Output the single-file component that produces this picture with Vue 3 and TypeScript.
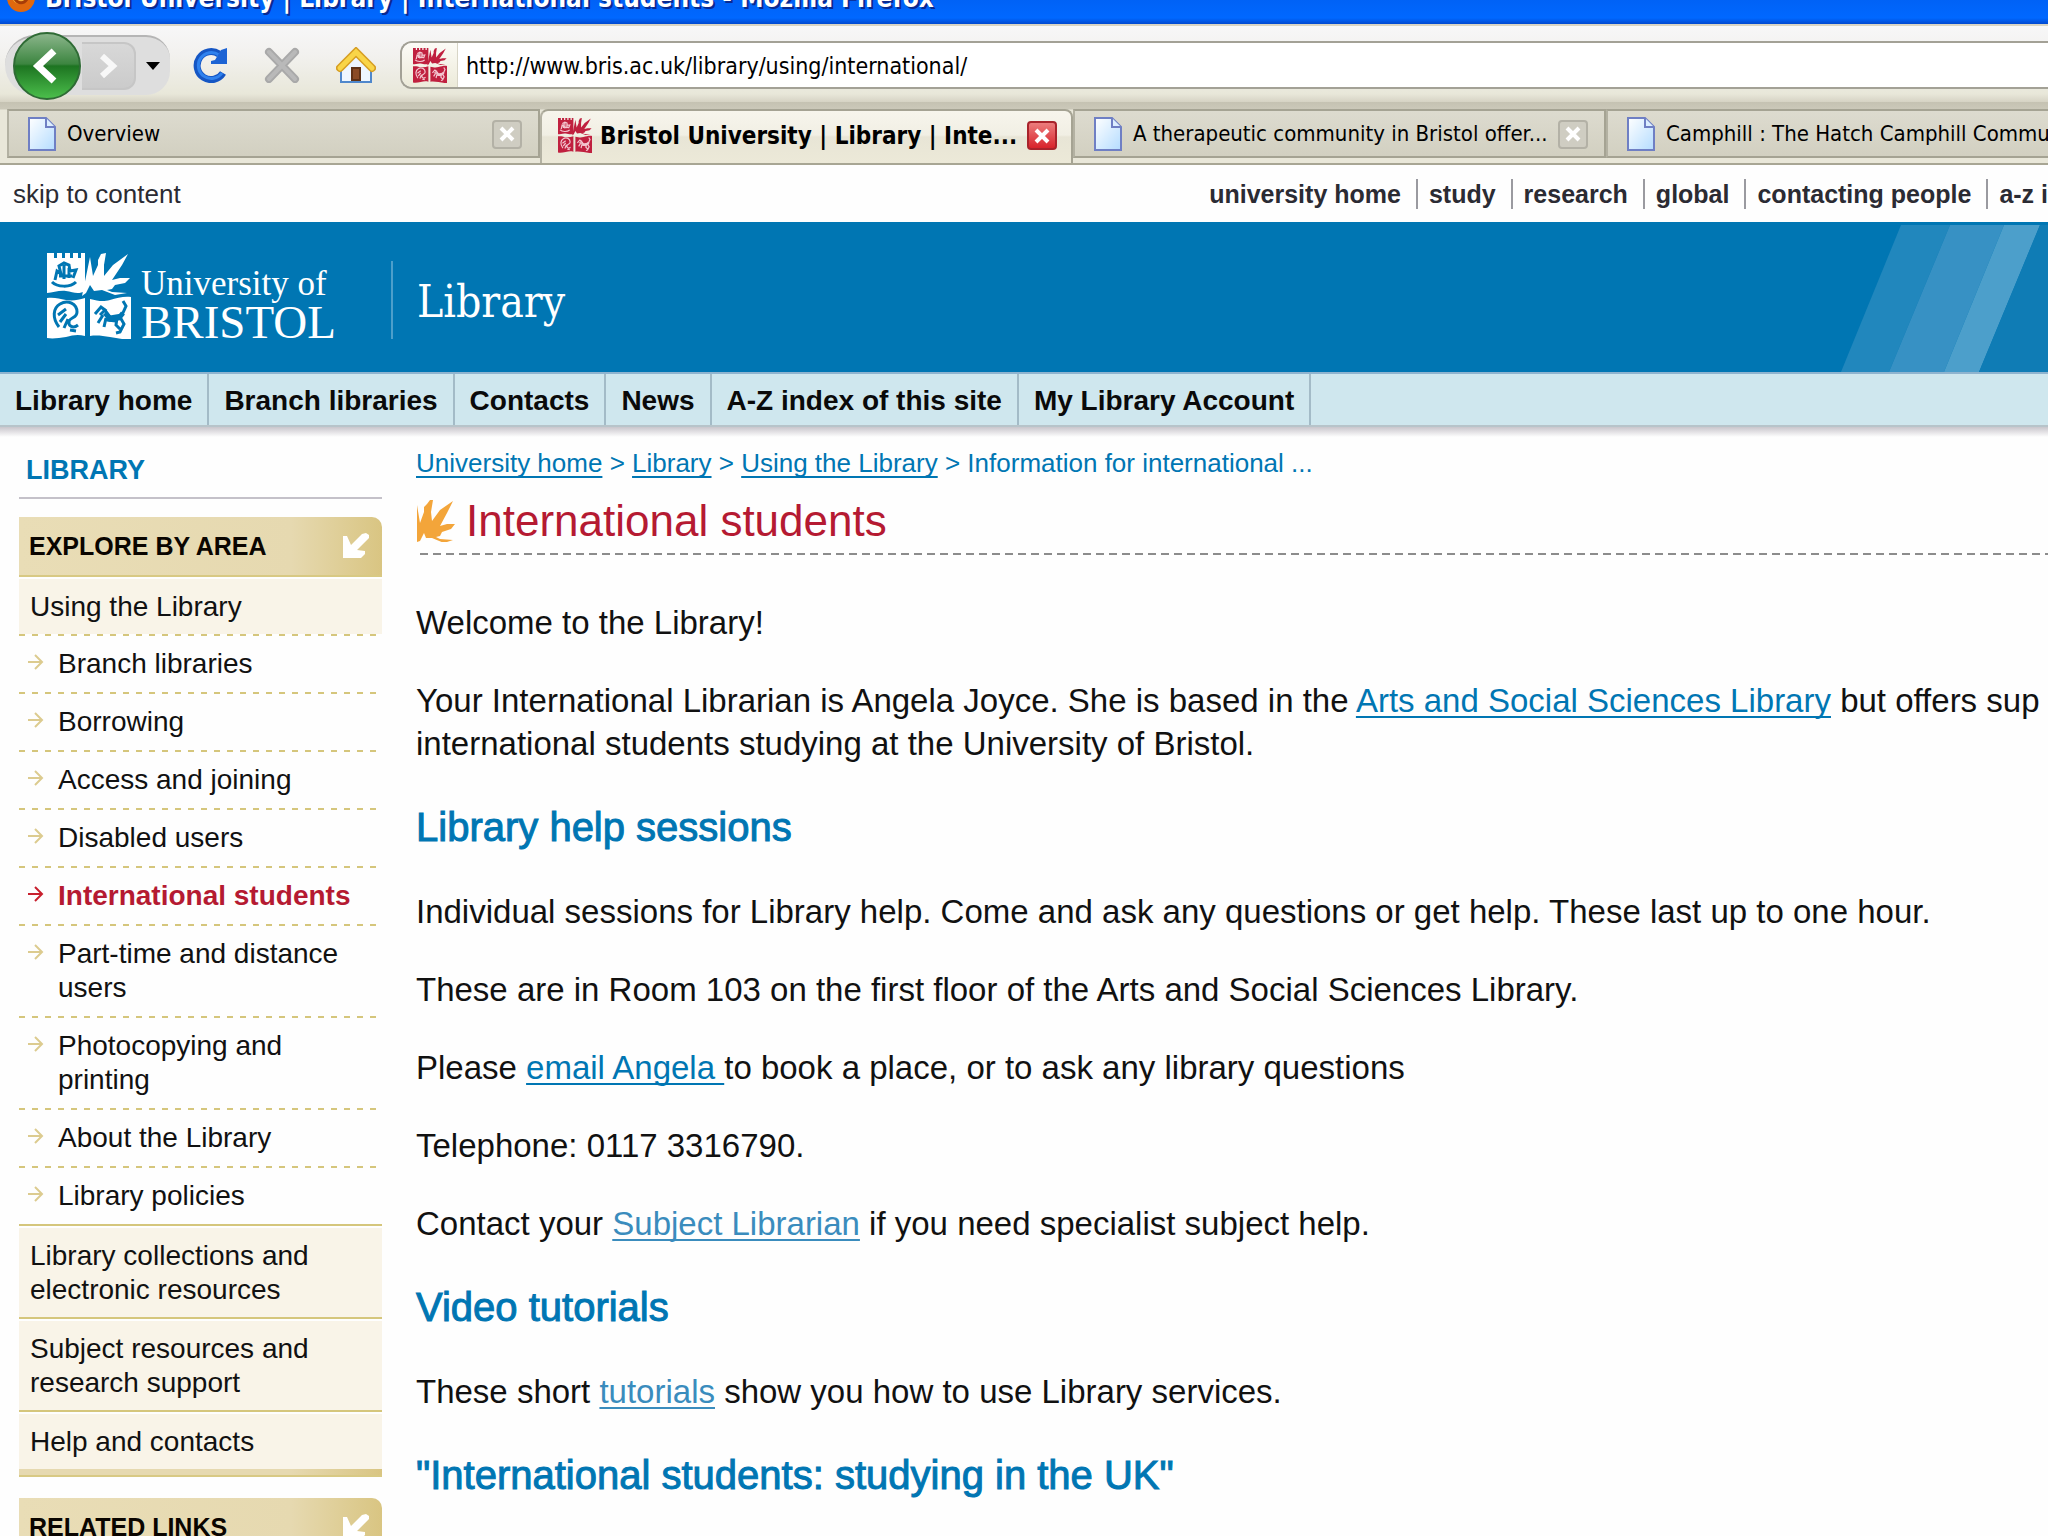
<script setup lang="ts">
import { ref } from 'vue'

interface Tab {
  title: string
  active?: boolean
  closable: boolean
}

interface SubItem {
  label: string
  current?: boolean
}

const address = ref('http://www.bris.ac.uk/library/using/international/')

const tabs: Tab[] = [
  { title: 'Overview', closable: true },
  { title: 'Bristol University | Library | Inte...', active: true, closable: true },
  { title: 'A therapeutic community in Bristol offer...', closable: true },
  { title: 'Camphill : The Hatch Camphill Commu', closable: false },
]

const topLinks: string[] = ['university home', 'study', 'research', 'global', 'contacting people', 'a-z i']

const siteLinks: string[] = [
  'Library home',
  'Branch libraries',
  'Contacts',
  'News',
  'A-Z index of this site',
  'My Library Account',
]

const subItems: SubItem[] = [
  { label: 'Branch libraries' },
  { label: 'Borrowing' },
  { label: 'Access and joining' },
  { label: 'Disabled users' },
  { label: 'International students', current: true },
  { label: 'Part-time and distance users' },
  { label: 'Photocopying and printing' },
  { label: 'About the Library' },
  { label: 'Library policies' },
]

const sections: string[] = [
  'Library collections and electronic resources',
  'Subject resources and research support',
  'Help and contacts',
]
</script>

<template>
  <div class="window">
    <svg class="defs" aria-hidden="true">
      <defs>
        <symbol id="crest" viewBox="0 0 84 86">
          <path
            fill="currentColor"
            d="M0 0h7v5h3V0h5v5h3V0h5v5h3V0h5v5h3V0h4v38c-7 4-12 1-19 0-7-1-13 2-19 2z"
          />
          <path
            fill="currentColor"
            d="M43 4l3 19 5-11 0-5 3-6 5-1-2 12 0 11 9-11L81 1l-6 11-10 15 8-2 10 0-5 5-10 2-3 4-5 1 5 2 15 1-12 2-13-5-8 1-4-6-4 8-4 3z"
          />
          <path fill="currentColor" d="M0 45c8-1 12 1 19 2 7 1 12 0 19-2v38c-7-2-12-1-19 1-7 1-13 2-19 1z" />
          <path fill="currentColor" d="M43 46c8 2 13 3 20 1 7-2 14-4 21-3v42c-8 1-14-1-21-2-7-1-13-2-20-1z" />
          <g fill="none" stroke="var(--crest-ink)" stroke-width="3">
            <path d="M5 29c5 5 18 6 24 0M8 27l2-9 4 3-2-8 5-3 5 2 1 6 6-1-3 8M12 23h13M17 12v14M22 15v10" />
            <path d="M12 74C5 65 6 55 13 51c8-5 17 0 17 8 0 6-6 5-8 9-1 5 4 8 9 4M11 62l8-6M13 69l6-8M17 75l4-9M23 77l6 1" />
            <path d="M48 61l6-7 4 3-5 5M57 56l6 8 12-2 4-9-3-5M56 62l-5 8M59 65l-2 9M73 64l4 7-4 8-4 1M70 65l-1 7 4 4M60 67l9 1" />
            <path d="M58 60l5 6 9-1 4-5" stroke-width="5" />
          </g>
        </symbol>
        <symbol id="flame" viewBox="0 0 40 42">
          <path
            fill="currentColor"
            d="M1 5l3 18 4-11 0-5 3-3 3-4h3l-2 12 1 9 8-11L37 1l-6 12-7 13 7-2 8 0-4 5-9 3-2 4-4 1 4 2 13 1-9 3-12-5-6 0-2-5-4 8-3 1z"
          />
        </symbol>
        <symbol id="corner-arrow" viewBox="0 0 26 26">
          <path fill="#fff" d="M0 3h4l4 9L19 1l4-1 3 2v3L14 17l8 1v3l-4 4H0z" />
        </symbol>
        <linearGradient id="page-fill" x1="0" y1="0" x2="1" y2="1">
          <stop offset="0" stop-color="#fff" />
          <stop offset="1" stop-color="#b4dcff" />
        </linearGradient>
        <linearGradient id="back-fill" x1="0" y1="0" x2="0" y2="1">
          <stop offset="0" stop-color="#8db78d" />
          <stop offset="0.47" stop-color="#3c8540" />
          <stop offset="0.5" stop-color="#1d7421" />
          <stop offset="1" stop-color="#4cc04c" />
        </linearGradient>
      </defs>
    </svg>

    <header class="titlebar">
      <div class="titlebar-row">
        <svg class="app-icon" viewBox="0 0 30 30" aria-hidden="true">
          <circle cx="15" cy="15" r="14" fill="#e0680e" />
          <circle cx="14" cy="13" r="8" fill="#f9b53c" />
          <path d="M9 16c3 5 9 5 12 0" fill="none" stroke="#a63c08" stroke-width="3" />
        </svg>
        <span>Bristol University | Library | International students - Mozilla Firefox</span>
      </div>
    </header>

    <div class="toolbar">
      <div class="history">
        <button class="back" type="button" aria-label="Back">
          <svg viewBox="0 0 70 70" aria-hidden="true">
            <circle cx="35" cy="35" r="33" fill="url(#back-fill)" stroke="#2f6b35" stroke-width="2" />
            <path d="M42 20L26 35l16 15" fill="none" stroke="#fff" stroke-width="7" />
          </svg>
        </button>
        <button class="forward" type="button" aria-label="Forward">
          <svg viewBox="0 0 20 26" aria-hidden="true">
            <path d="M4 3l11 10L4 23" fill="none" stroke="#f8f8f8" stroke-width="6" />
          </svg>
        </button>
        <button class="recent" type="button" aria-label="Recent pages">
          <svg viewBox="0 0 14 8" aria-hidden="true"><path d="M0 0h14L7 8z" fill="#000" /></svg>
        </button>
      </div>
      <button class="tool" type="button" aria-label="Reload">
        <svg viewBox="0 0 36 36" aria-hidden="true">
          <path d="M31 26A14 14 0 1 1 27 7" fill="none" stroke="#1556c4" stroke-width="7" />
          <path d="M30 26A13 13 0 1 1 27 8" fill="none" stroke="#2f82ee" stroke-width="3" />
          <path d="M35 1v16H19v-3l4-1 6-10z" fill="#1c63d4" />
        </svg>
      </button>
      <button class="tool" type="button" aria-label="Stop">
        <svg viewBox="0 0 36 36" aria-hidden="true">
          <path d="M5 5l26 27M31 5L5 32" fill="none" stroke="#a9a9a9" stroke-width="8" stroke-linecap="round" />
          <path d="M5 5l26 27M31 5L5 32" fill="none" stroke="#b9b9b9" stroke-width="4" stroke-linecap="round" />
        </svg>
      </button>
      <button class="tool" type="button" aria-label="Home">
        <svg viewBox="0 0 40 36" aria-hidden="true">
          <path d="M5 19L20 6l15 13v16H5z" fill="#eef6ff" stroke="#4f87cc" stroke-width="2" />
          <path d="M16 21h8v12h-8z" fill="#8a4b25" stroke="#5f3216" stroke-width="2" />
          <path d="M4 21L20 5l16 16" fill="none" stroke="#d69e22" stroke-width="8" stroke-linecap="round" />
          <path d="M4 21L20 5l16 16" fill="none" stroke="#f9d548" stroke-width="5" stroke-linecap="round" />
        </svg>
      </button>
      <div class="address">
        <span class="site-id"><svg class="favicon"><use href="#crest" /></svg></span>
        <input v-model="address" type="text" aria-label="Address" spellcheck="false" />
      </div>
    </div>

    <div class="tabstrip">
      <div v-for="tab in tabs" :key="tab.title" class="tab" :class="{ active: tab.active }">
        <svg v-if="tab.active" class="favicon"><use href="#crest" /></svg>
        <svg v-else class="page-icon" viewBox="0 0 28 34" aria-hidden="true">
          <path d="M1 1h17l9 9v23H1z" fill="url(#page-fill)" stroke="#6f7fc4" stroke-width="2" />
          <path d="M18 1v9h9" fill="#dceeff" stroke="#6f7fc4" stroke-width="2" />
        </svg>
        <span class="tab-title">{{ tab.title }}</span>
        <button v-if="tab.closable" class="close" type="button" aria-label="Close tab">
          <svg viewBox="0 0 16 16" aria-hidden="true">
            <path d="M2 2l12 12M14 2L2 14" fill="none" stroke="#fff" stroke-width="4" />
          </svg>
        </button>
      </div>
    </div>

    <nav class="toplinks" aria-label="University">
      <a class="skip" href="#content">skip to content</a>
      <ul>
        <li v-for="link in topLinks" :key="link"><a href="#">{{ link }}</a></li>
      </ul>
    </nav>

    <div class="banner">
      <a class="logo" href="#">
        <svg class="logo-crest" aria-hidden="true"><use href="#crest" /></svg>
        <span class="logo-words">
          <span class="logo-small">University of</span>
          <span class="logo-large">BRISTOL</span>
        </span>
      </a>
      <span class="department">Library</span>
      <svg class="stripes" viewBox="0 0 208 150" preserveAspectRatio="none" aria-hidden="true">
        <path d="M61 3h49L49 150H1z" fill="#2187bd" />
        <path d="M110 3h54l-60 147H49z" fill="#3791c4" />
        <path d="M164 3h36l-61 147h-35z" fill="#4c9fcb" />
        <path d="M200 3h8v147h-69z" fill="#0f7cb5" />
      </svg>
    </div>

    <nav class="sitenav" aria-label="Library">
      <a v-for="link in siteLinks" :key="link" href="#">{{ link }}</a>
    </nav>
    <div class="navshadow"></div>

    <div class="columns">
      <aside>
        <h2 class="side-title">LIBRARY</h2>
        <section class="box">
          <h3>EXPLORE BY AREA<svg class="corner" aria-hidden="true"><use href="#corner-arrow" /></svg></h3>
          <a class="parent" href="#">Using the Library</a>
          <ul>
            <li v-for="item in subItems" :key="item.label" :class="{ current: item.current }">
              <svg viewBox="0 0 16 16" aria-hidden="true">
                <path d="M0 8h14M7 1l7 7-7 7" fill="none" stroke="currentColor" stroke-width="2" />
              </svg>
              <a href="#">{{ item.label }}</a>
            </li>
          </ul>
          <a v-for="section in sections" :key="section" class="section" href="#">{{ section }}</a>
          <div class="box-end"></div>
        </section>
        <section class="box">
          <h3>RELATED LINKS<svg class="corner" aria-hidden="true"><use href="#corner-arrow" /></svg></h3>
        </section>
      </aside>

      <main id="content">
        <div class="crumbs">
          <a href="#">University home</a> &gt; <a href="#">Library</a> &gt; <a href="#">Using the Library</a> &gt;
          Information for international ...
        </div>
        <h1>
          <svg class="flame" aria-hidden="true"><use href="#flame" /></svg>
          <span>International students</span>
        </h1>
        <article>
          <p>Welcome to the Library!</p>
          <p>
            Your International Librarian is Angela Joyce. She is based in the
            <a href="#">Arts and Social Sciences Library</a> but offers sup<br />
            international students studying at the University of Bristol.
          </p>
          <h2>Library help sessions</h2>
          <p>
            Individual sessions for Library help. Come and ask any questions or get help. These last up to one hour.
          </p>
          <p>These are in Room 103 on the first floor of the Arts and Social Sciences Library.</p>
          <p>Please <a href="#">email Angela&nbsp;</a>to book a place, or to ask any library questions</p>
          <p>Telephone: 0117 3316790.</p>
          <p>
            Contact your <a class="visited" href="#">Subject Librarian</a> if you need specialist subject help.
          </p>
          <h2>Video tutorials</h2>
          <p>These short <a class="visited" href="#">tutorials</a> show you how to use Library services.</p>
          <h2>"International students: studying in the UK"</h2>
        </article>
      </main>
    </div>
  </div>
</template>

<style>
body {
  background: #fefefe;
}
</style>

<style scoped>
.window {
  height: 100vh;
  overflow: hidden;
  font-family: "Liberation Sans", Arial, sans-serif;
  color: #111;
  white-space: nowrap;
  --crest-ink: #f3c5cf;
}
.window * {
  box-sizing: border-box;
}
a {
  color: inherit;
  text-decoration: none;
}
h1,
h2,
h3,
p,
ul {
  margin: 0;
  padding: 0;
}
ul {
  list-style: none;
}
button {
  margin: 0;
  padding: 0;
  border: 0;
  background: none;
  flex: none;
}
svg {
  display: block;
  flex: none;
}
.defs {
  position: absolute;
  width: 0;
  height: 0;
}

/* browser chrome */
.titlebar {
  height: 24px;
  overflow: hidden;
  background: linear-gradient(#0062f6 0, #0068ff 18px, #0048d0 24px);
}
.titlebar-row {
  display: flex;
  align-items: center;
  gap: 9px;
  height: 32px;
  margin: -18px 0 0 6px;
  font: bold 26px/32px "DejaVu Sans Condensed", "DejaVu Sans", sans-serif;
  color: #fff;
  text-shadow: 2px 2px 0 #0a2a90;
}
.app-icon {
  width: 30px;
  height: 30px;
}
.toolbar {
  display: flex;
  align-items: center;
  height: 78px;
  padding: 2px 0 0 5px;
  border-top: 2px solid #d8d4c4;
  background: linear-gradient(#f7f7f8 0, #f2f1ee 30px, #e8e7d9 68px, #d6d3c4 100%);
}
.history {
  display: flex;
  align-items: center;
  width: 165px;
  height: 60px;
  margin-right: 22px;
  border-top: 2px solid #b5b5b5;
  border-radius: 30px 24px 24px 30px;
  background: #dedede;
}
.back {
  width: 70px;
  height: 70px;
  margin: -5px 0 -5px 7px;
}
.back svg {
  width: 70px;
  height: 70px;
}
.forward {
  display: grid;
  place-items: center;
  width: 54px;
  height: 48px;
  border: 2px solid #c6c6c6;
  border-left: 0;
  border-radius: 0 12px 12px 0;
  background: linear-gradient(#d8d8d8, #cbcbcb);
}
.forward svg {
  width: 20px;
  height: 26px;
}
.recent {
  width: 14px;
  margin-left: 10px;
}
.recent svg {
  width: 14px;
  height: 8px;
}
.tool {
  margin-right: 36px;
}
.tool svg {
  width: 36px;
  height: 36px;
}
.tool:nth-of-type(3) svg {
  width: 40px;
}
.address {
  display: flex;
  flex: 1;
  height: 48px;
  margin-left: -12px;
  border: 2px solid #a3a196;
  border-right: 0;
  border-radius: 12px 0 0 12px;
  background: #fff;
  overflow: hidden;
}
.site-id {
  display: flex;
  align-items: center;
  justify-content: flex-end;
  width: 56px;
  padding-right: 10px;
  border-right: 1px solid #d8d5c6;
  background: linear-gradient(#fcfbf6, #ecead9);
}
.favicon {
  width: 34px;
  height: 35px;
  color: #c0203f;
}
.address input {
  flex: 1;
  min-width: 0;
  padding: 2px 0 0 8px;
  border: 0;
  outline: 0;
  background: none;
  font: 23px "DejaVu Sans Condensed", "DejaVu Sans", sans-serif;
  color: #000;
}
.tabstrip {
  display: flex;
  align-items: flex-start;
  height: 63px;
  padding: 7px 0 0 7px;
  overflow: hidden;
  border-bottom: 2px solid #a8a694;
  background: linear-gradient(#c5c2b2 0, #cbc8b9 7px, #e9e7d9 8px, #e9e7d9 100%);
}
.tab {
  display: flex;
  align-items: center;
  flex: 0 0 533px;
  min-width: 0;
  height: 49px;
  padding: 1px 16px 0 19px;
  border: 2px solid #a5a393;
  border-left-color: #b3b1a2;
  background: linear-gradient(#dddbcf, #d2d0c1);
  font: 22px/28px "DejaVu Sans Condensed", "DejaVu Sans", sans-serif;
  color: #000;
}
.tab.active {
  height: 54px;
  padding: 0 14px 3px 16px;
  border-bottom: 0;
  border-radius: 8px 8px 0 0;
  background: linear-gradient(#f7f5ec 0, #f1efe4 24px, #e8e5d6 26px, #ece9d8 100%);
  font-size: 24px;
  font-weight: bold;
}
.tab.active .tab-title {
  margin-left: 8px;
}
.page-icon {
  width: 28px;
  height: 34px;
}
.tab-title {
  flex: 1;
  min-width: 0;
  margin-left: 11px;
}
.close {
  display: grid;
  place-items: center;
  width: 30px;
  height: 29px;
  border: 2px solid #b3b1a6;
  border-radius: 4px;
  background: #cfcdc2;
}
.close svg {
  width: 16px;
  height: 16px;
}
.active .close {
  border-color: #a8232b;
  background: linear-gradient(#ec7d7d, #d8232b);
}

/* site header */
.toplinks {
  display: flex;
  align-items: center;
  height: 57px;
  padding-left: 13px;
  font-size: 26px;
  line-height: 30px;
  color: #2b2b33;
}
.skip {
  flex: 1;
}
.toplinks ul {
  display: flex;
  font-size: 25px;
  font-weight: bold;
}
.toplinks li {
  padding: 0 15px 0 11px;
  border-right: 2px solid #9a9aa0;
}
.toplinks li:last-child {
  padding-right: 0;
  border-right: 0;
}
.banner {
  position: relative;
  display: flex;
  align-items: flex-end;
  height: 152px;
  padding: 0 0 33px 47px;
  border-bottom: 2px solid #8fb4cf;
  background: #0076b3;
  color: #fff;
}
.logo {
  display: flex;
  align-items: flex-end;
  gap: 10px;
  width: 344px;
  --crest-ink: #0076b3;
}
.logo-crest {
  width: 84px;
  height: 86px;
}
.logo-words {
  display: grid;
  font-family: "Liberation Serif", "Times New Roman", serif;
}
.logo-small {
  font-size: 35px;
  line-height: 42px;
}
.logo-large {
  font-size: 47px;
  line-height: 34px;
}
.department {
  height: 78px;
  padding-left: 24px;
  border-left: 2px solid #4c9fcb;
  font: 44px/82px "DejaVu Serif Condensed", "DejaVu Serif", serif;
}
.stripes {
  position: absolute;
  top: 0;
  right: 0;
  width: 208px;
  height: 150px;
}
.sitenav {
  display: flex;
  height: 53px;
  border-bottom: 2px solid #b7c4ca;
  background: #cfe7ee;
  font-size: 28px;
  font-weight: bold;
  line-height: 54px;
  color: #0a0a0a;
}
.sitenav a {
  padding: 0 15px;
  border-right: 2px solid #a3bbc7;
}
.navshadow {
  height: 10px;
  background: linear-gradient(#c9c6cc, #fefefe);
}

/* page columns */
.columns {
  display: flex;
  gap: 34px;
  padding-left: 19px;
}
aside {
  flex: none;
  width: 363px;
  padding-top: 16px;
}
.side-title {
  margin-bottom: 18px;
  padding: 0 8px 10px 7px;
  border-bottom: 2px solid #c4c1c9;
  font-size: 27px;
  line-height: 34px;
  color: #0076b3;
}
.box {
  margin-bottom: 21px;
  font-size: 28px;
  line-height: 34px;
  white-space: normal;
}
.box h3 {
  display: flex;
  align-items: center;
  justify-content: space-between;
  height: 60px;
  padding: 0 13px 0 10px;
  border-bottom: 2px solid #d8c983;
  border-radius: 0 10px 0 0;
  background: linear-gradient(90deg, #e9ddb6 0, #e6d9b0 75%, #d9c582 100%);
  font-size: 25px;
  color: #0a0500;
}
.corner {
  width: 26px;
  height: 26px;
}
.parent,
.section {
  display: block;
  margin-top: 2px;
  padding: 11px 11px 10px;
  background: #f9f4e8;
}
.parent,
.box li {
  background-image: repeating-linear-gradient(90deg, #d5c67c 0, #d5c67c 6px, #fefefe 6px, #fefefe 13px);
  background-position: 0 100%;
  background-size: 100% 2px;
  background-repeat: no-repeat;
}
.parent {
  padding-bottom: 12px;
}
.box li {
  display: flex;
  gap: 14px;
  padding: 11px 8px 13px 9px;
}
.box li svg {
  width: 16px;
  height: 16px;
  margin-top: 7px;
  color: #dccb8f;
}
.box li.current {
  font-weight: bold;
  color: #b51a32;
}
.box li.current svg {
  color: #c8202e;
}
.box li:last-child {
  background-image: linear-gradient(#d5c67c, #d5c67c);
}
.section {
  padding-right: 40px;
  border-bottom: 2px solid #d5c67c;
}
.section:last-of-type {
  border-bottom: 0;
}
.box-end {
  height: 8px;
  background: linear-gradient(90deg, #e6d9b0 0, #e6d9b0 75%, #d9c582 100%);
  border-bottom: 2px solid #d8c983;
}
main {
  flex: 1;
  min-width: 0;
  padding-top: 10px;
}
.crumbs {
  font-size: 26px;
  line-height: 32px;
  color: #0076b3;
}
.crumbs a,
article a {
  color: #0076b3;
  text-decoration: underline;
  text-decoration-thickness: 2px;
  text-underline-offset: 4px;
  text-decoration-skip-ink: none;
}
h1 {
  display: flex;
  align-items: center;
  gap: 10px;
  margin-top: 16px;
  padding-bottom: 8px;
  background: repeating-linear-gradient(90deg, #8c8c8c 0, #8c8c8c 8px, #fefefe 8px, #fefefe 13px) 4px 100% / 100% 2px no-repeat;
  font-size: 44px;
  font-weight: normal;
  line-height: 52px;
  color: #b51a32;
}
.flame {
  width: 40px;
  height: 42px;
  color: #f3a53a;
}
article {
  padding-top: 46px;
  font-size: 33px;
  line-height: 43px;
}
article p {
  margin-bottom: 35px;
}
article h2 {
  margin-bottom: 35px;
  font-size: 40px;
  font-weight: normal;
  line-height: 55px;
  color: #0076b3;
  -webkit-text-stroke: 1px #0076b3;
}
article a.visited {
  color: #3a8cbd;
}
</style>
